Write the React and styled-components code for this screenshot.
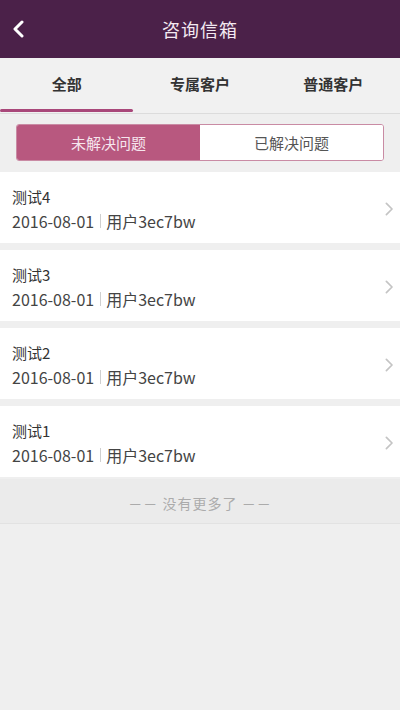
import React, { useState } from "react";
import styled, { createGlobalStyle } from "styled-components";

const Global = createGlobalStyle`
  html, body { margin: 0; padding: 0; background: #efefef; }
  body { font-family: "Noto Sans CJK SC", "Noto Sans", sans-serif; }
  * { box-sizing: border-box; }
`;

const Page = styled.div`
  width: 400px;
  min-height: 710px;
  background: #efefef;
  display: flex;
  flex-direction: column;
`;

const Header = styled.header`
  height: 58px;
  background: #4b2149;
  display: grid;
  grid-template-columns: 58px 1fr 58px;
  align-items: center;
`;

const BackBtn = styled.button`
  border: none;
  background: none;
  padding: 0 0 0 11px;
  display: flex;
  align-items: center;
  height: 100%;
`;

const Title = styled.h1`
  margin: 0;
  text-align: center;
  color: #f3e9f1;
  font-size: 18px;
  font-weight: 400;
  letter-spacing: 1px;
`;

const Tabs = styled.nav`
  height: 56px;
  display: grid;
  grid-template-columns: repeat(3, 1fr);
  background: #f1f1f1;
  border-bottom: 1px solid #dcdcdc;
`;

const Tab = styled.div`
  position: relative;
  display: flex;
  align-items: center;
  justify-content: center;
  font-size: 15px;
  font-weight: 700;
  color: #333;
  padding-bottom: 4px;
  &::after {
    content: "";
    position: absolute;
    left: 0;
    right: 0;
    bottom: 1px;
    height: 3px;
    border-radius: 2px;
    background: ${(p) => (p.$active ? "#a9487a" : "transparent")};
  }
`;

const SegmentWrap = styled.div`
  padding: 10px 16px 11px 16px;
`;

const Segment = styled.div`
  display: grid;
  grid-template-columns: 1fr 1fr;
  height: 37px;
  border: 1px solid #c98ba4;
  border-radius: 3px;
  overflow: hidden;
  background: #fff;
`;

const SegBtn = styled.div`
  display: flex;
  align-items: center;
  justify-content: center;
  font-size: 15px;
  background: ${(p) => (p.$active ? "#b8587f" : "#fff")};
  color: ${(p) => (p.$active ? "#f6e6ee" : "#555")};
`;

const List = styled.ul`
  list-style: none;
  margin: 0;
  padding: 0;
  display: flex;
  flex-direction: column;
  gap: 7px;
`;

const Item = styled.li`
  height: 71px;
  background: #fff;
  display: flex;
  align-items: center;
  justify-content: space-between;
  padding: 2px 7px 0 12px;
`;

const ItemText = styled.div`
  display: flex;
  flex-direction: column;
  gap: 4px;
`;

const ItemTitle = styled.div`
  font-size: 15px;
  color: #333;
  line-height: 21px;
`;

const ItemMeta = styled.div`
  font-size: 16px;
  color: #444;
  line-height: 21px;
  display: flex;
  align-items: center;
`;

const Sep = styled.span`
  display: inline-block;
  width: 1px;
  height: 14px;
  background: #cfcfcf;
  margin: 0 5px 0 6px;
`;

const Footer = styled.div`
  height: 45px;
  margin-top: 2px;
  background: #ebebeb;
  border-bottom: 1px solid #e2e2e2;
  display: flex;
  align-items: center;
  justify-content: center;
  color: #ababab;
  font-size: 14px;
  letter-spacing: 1px;
  padding-top: 3px;
`;

const Chevron = ({ color = "#c4c4c4", size = 14, w = 2 }) => (
  <svg width={size * 0.6} height={size} viewBox="0 0 6 10" fill="none">
    <path d="M1 1l4 4-4 4" stroke={color} strokeWidth={w * 0.6} strokeLinecap="round" strokeLinejoin="round" />
  </svg>
);

const items = ["测试4", "测试3", "测试2", "测试1"];

export default function App() {
  const [tab, setTab] = useState(0);
  const [seg, setSeg] = useState(0);
  return (
    <Page>
      <Global />
      <Header>
        <BackBtn aria-label="返回">
          <svg width="14" height="18" viewBox="0 0 14 18" fill="none">
            <path d="M11 2L4 9l7 7" stroke="#fff" strokeWidth="3" strokeLinecap="round" strokeLinejoin="round" />
          </svg>
        </BackBtn>
        <Title>咨询信箱</Title>
        <span />
      </Header>
      <Tabs>
        {["全部", "专属客户", "普通客户"].map((t, i) => (
          <Tab key={t} $active={tab === i} onClick={() => setTab(i)}>
            {t}
          </Tab>
        ))}
      </Tabs>
      <SegmentWrap>
        <Segment>
          {["未解决问题", "已解决问题"].map((t, i) => (
            <SegBtn key={t} $active={seg === i} onClick={() => setSeg(i)}>
              {t}
            </SegBtn>
          ))}
        </Segment>
      </SegmentWrap>
      <List>
        {items.map((t) => (
          <Item key={t}>
            <ItemText>
              <ItemTitle>{t}</ItemTitle>
              <ItemMeta>
                2016-08-01<Sep />用户3ec7bw
              </ItemMeta>
            </ItemText>
            <Chevron />
          </Item>
        ))}
      </List>
      <Footer>－－ 没有更多了 －－</Footer>
    </Page>
  );
}
